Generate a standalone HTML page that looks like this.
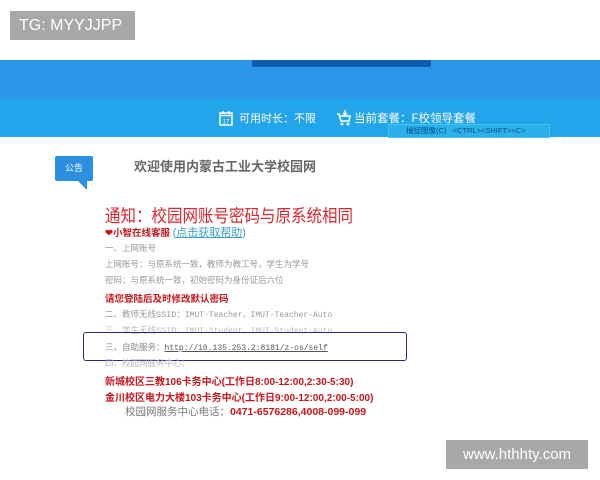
<!DOCTYPE html>
<html><head><meta charset="utf-8"><style>
body{margin:0;width:600px;height:480px;background:#fff;position:relative;overflow:hidden;font-family:"Liberation Sans","Noto Sans CJK SC",sans-serif}
.a{position:absolute;white-space:nowrap}
.g{color:#999;font-size:8.5px;font-family:"Liberation Mono","Noto Sans CJK SC",monospace}
.m{font-size:8px}
.r{color:#c4161c;font-weight:bold;font-size:10px}
</style></head><body>
<div class="a" style="left:0;top:60px;width:600px;height:40px;background:#2b97ea"></div>
<div class="a" style="left:252px;top:60px;width:179px;height:7px;background:#0f5cb0;border-radius:0 0 2px 2px"></div>
<div class="a" style="left:0;top:99px;width:600px;height:38px;background:#22a5ea"></div>
<div class="a" style="left:10px;top:11px;width:125px;height:29px;background:#a8a8a8;color:#fff;font-size:16px;line-height:29px;text-indent:9px">TG: MYYJJPP</div>
<svg class="a" style="left:219px;top:110px" width="14" height="16" viewBox="0 0 14 16"><rect x="1" y="3" width="12" height="12" fill="none" stroke="#fff" stroke-width="1.5"/><line x1="1" y1="5.5" x2="13" y2="5.5" stroke="#fff" stroke-width="1.5"/><line x1="4" y1="1" x2="4" y2="4" stroke="#fff" stroke-width="1.5"/><line x1="10" y1="1" x2="10" y2="4" stroke="#fff" stroke-width="1.5"/><text x="7" y="13.5" font-size="6" fill="#fff" text-anchor="middle">17</text></svg>
<div class="a" style="left:239px;top:110px;color:#fff;font-size:11px">可用时长：不限</div>
<svg class="a" style="left:336px;top:109px" width="15" height="17" viewBox="0 0 15 17"><path d="M1 5h2l2 7h8l1-5H4" fill="none" stroke="#fff" stroke-width="1.6"/><circle cx="6" cy="15" r="1.5" fill="#fff"/><circle cx="12" cy="15" r="1.5" fill="#fff"/><path d="M9 1v5M7 4l2 2 2-2" fill="none" stroke="#fff" stroke-width="1.4"/></svg>
<div class="a" style="left:354px;top:110px;color:#fff;font-size:11.5px">当前套餐：F校领导套餐</div>
<div class="a" style="left:388px;top:124px;width:160px;height:12px;background:#2ab0ea;border:1px solid #48c0f0;color:#0b4f8a;font-size:7.5px;line-height:12px;text-indent:17px">捕捉图像(C)&nbsp;&nbsp;&nbsp;&lt;CTRL&gt;&lt;SHIFT&gt;&lt;C&gt;</div>
<div class="a" style="left:55px;top:156px;width:38px;height:25px;background:#2b8fe0;border-radius:2px;color:#fff;font-size:9px;line-height:25px;text-align:center">公告</div>
<div class="a" style="left:78px;top:181px;width:0;height:0;border-left:9px solid transparent;border-top:9px solid #2b8fe0"></div>
<div class="a" style="left:134px;top:156px;color:#666;font-size:13px;font-weight:bold">欢迎使用内蒙古工业大学校园网</div>
<div class="a" style="left:105px;top:203px;color:#d9272e;font-size:15.5px;transform:scaleY(1.12);transform-origin:0 0">通知：校园网账号密码与原系统相同</div>
<div class="a r" style="left:105px;top:224px;font-size:9.5px">❤小智在线客服 <span style="color:#3a9fc8;font-weight:normal;font-size:11px">(<u>点击获取帮助</u>)</span></div>
<div class="a g" style="left:105px;top:242px">一、上网账号</div>
<div class="a g" style="left:105px;top:258px">上网账号：与原系统一致，教师为教工号，学生为学号</div>
<div class="a g" style="left:105px;top:274px">密码：与原系统一致，初始密码为身份证后六位</div>
<div class="a r" style="left:105px;top:291px;font-size:9.5px">请您登陆后及时修改默认密码</div>
<div class="a g" style="left:105px;top:308px">二、教师无线SSID：<span class="m">IMUT-Teacher、IMUT-Teacher-Auto</span></div>
<div class="a g" style="left:105px;top:324px;color:#bbb">三、学生无线SSID：<span class="m">IMUT-Student、IMUT-Student-Auto</span></div>
<div class="a" style="left:83px;top:332px;width:322px;height:27px;border:1.5px solid #2a2a78;border-radius:3px"></div>
<div class="a g" style="left:105px;top:341px;color:#888">三、自助服务：<u class="m" style="color:#555">http://10.135.253.2:8181/z-os/self</u></div>
<div class="a g" style="left:105px;top:357px;color:#bbb">四、校园网服务中心：</div>
<div class="a r" style="left:105px;top:373px">新城校区三教106卡务中心(工作日8:00-12:00,2:30-5:30)</div>
<div class="a r" style="left:105px;top:389px">金川校区电力大楼103卡务中心(工作日9:00-12:00,2:00-5:00)</div>
<div class="a" style="left:125px;top:404px;color:#777;font-size:10.5px">校园网服务中心电话：<b style="color:#c4161c">0471-6576286,4008-099-099</b></div>
<div class="a" style="left:446px;top:440px;width:142px;height:29px;background:#a8a8a8;color:#fff;font-size:15px;line-height:29px;text-align:center">www.hthhty.com</div>
</body></html>
